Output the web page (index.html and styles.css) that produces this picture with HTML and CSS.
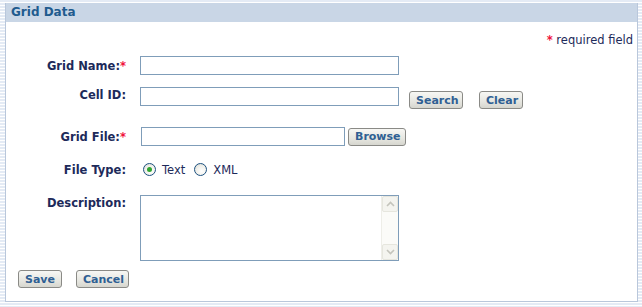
FILE: index.html
```html
<!DOCTYPE html>
<html lang="en">

<head>
    <meta charset="UTF-8">
    <title>Grid Data</title>
    <link rel="stylesheet" href="styles.css">
</head>

<body>
    <div class="panel">
        <div class="panel-head">Grid Data</div>
        <div class="panel-body">
            <div class="req-note"><span class="star">*</span> required field</div>

            <div class="row row-name">
                <label class="lbl">Grid Name:<span class="star">*</span></label>
                <input type="text" class="txt">
            </div>

            <div class="row row-cell">
                <label class="lbl">Cell ID:</label>
                <input type="text" class="txt">
                <button class="btn btn-search">Search</button>
                <button class="btn btn-clear">Clear</button>
            </div>

            <div class="row row-file">
                <label class="lbl">Grid File:<span class="star">*</span></label>
                <input type="text" class="txt txt-file">
                <button class="btn btn-browse">Browse</button>
            </div>

            <div class="row row-type">
                <label class="lbl">File Type:</label>
                <span class="radio checked"></span><span class="opt">Text</span>
                <span class="radio"></span><span class="opt">XML</span>
            </div>

            <div class="row row-desc">
                <label class="lbl">Description:</label>
                <div class="area">
                    <textarea></textarea>
                    <div class="sbar">
                        <div class="sbtn">
                            <svg width="9" height="6" viewBox="0 0 9 6"><path d="M1 5 L4.5 1.5 L8 5" fill="none" stroke="#c4c4bc" stroke-width="1.6"/></svg>
                        </div>
                        <div class="strack"></div>
                        <div class="sbtn">
                            <svg width="9" height="6" viewBox="0 0 9 6"><path d="M1 1 L4.5 4.5 L8 1" fill="none" stroke="#c4c4bc" stroke-width="1.6"/></svg>
                        </div>
                    </div>
                </div>
            </div>

            <div class="actions">
                <button class="btn btn-save">Save</button>
                <button class="btn btn-cancel">Cancel</button>
            </div>
        </div>
    </div>
</body>

</html>
```

FILE: styles.css
```css
body {
    margin: 0;
    height: 307px;
    overflow: hidden;
    font-family: "DejaVu Sans", Verdana, sans-serif;
    font-size: 11.5px;
    background: repeating-linear-gradient(to bottom, #e4ebf5 0, #e4ebf5 2px, #ffffff 2px, #ffffff 3px);
}

button,
input,
textarea {
    outline: none;
    font-family: inherit;
}

.panel {
    width: 631px;
    margin: 3px 0 0 5px;
    border-left: 1px solid #b9c7db;
    border-right: 1px solid #b9c7db;
    border-bottom: 1px solid #b9c7db;
    background-color: #fff;
}

.panel-head {
    height: 19px;
    line-height: 19px;
    padding-left: 5px;
    background-color: #c9d6e6;
    color: #1f5b8e;
    font-weight: bold;
    font-size: 12px;
}

.panel-body {
    height: 279px;
    padding-top: 12px;
    box-sizing: border-box;
}

.req-note {
    text-align: right;
    padding-right: 4px;
    height: 13px;
    line-height: 13px;
    color: #1d2a5a;
}

.star {
    color: #f0143c;
    font-weight: bold;
}

.row {
    display: flex;
    align-items: center;
}

.lbl {
    width: 120px;
    margin-right: 14px;
    text-align: right;
    font-weight: bold;
    color: #1d2a5a;
}

.txt {
    width: 259px;
    height: 19px;
    box-sizing: border-box;
    border: 1px solid #7f9db9;
    padding: 1px 3px;
    margin: 0;
}

.row-name {
    margin-top: 9px;
}

.row-cell {
    margin-top: 12px;
    align-items: flex-start;
}

.row-cell .lbl {
    line-height: 17px;
}

.row-file {
    margin-top: 18px;
}

.txt-file {
    width: 204px;
    margin-left: 1px;
}

.row-type {
    margin-top: 14px;
    height: 19px;
}

.row-desc {
    margin-top: 16px;
    align-items: flex-start;
}

.row-desc .lbl {
    padding-top: 1px;
}

.btn {
    height: 18px;
    box-sizing: border-box;
    padding: 0 6px;
    border: 1px solid #8a8a86;
    border-radius: 3px;
    background: linear-gradient(to bottom, #f7f7f4 0%, #e6e6e0 60%, #d6d6cf 100%);
    color: #2f5f93;
    font-weight: bold;
    font-size: 11px;
    line-height: 15px;
    margin: 0;
}

.btn-search {
    margin: 4px 0 0 10px;
    width: 54px;
}

.btn-clear {
    margin: 4px 0 0 16px;
    width: 44px;
}

.btn-browse {
    margin-left: 3px;
    width: 58px;
}

.radio {
    width: 13px;
    height: 13px;
    box-sizing: border-box;
    border: 1px solid #1c5180;
    border-radius: 50%;
    background: radial-gradient(circle at 60% 65%, #ffffff 0%, #f1f1ec 50%, #d6d6ce 100%);
    margin: 0 6px 0 3px;
    position: relative;
}

.radio.checked::after {
    content: "";
    position: absolute;
    left: 3px;
    top: 3px;
    width: 5px;
    height: 5px;
    border-radius: 50%;
    background-color: #2fa52f;
}

.opt {
    color: #1d2a5a;
    margin-right: 6px;
}

.area {
    width: 259px;
    height: 66px;
    box-sizing: border-box;
    border: 1px solid #7f9db9;
    display: flex;
}

.area textarea {
    flex: 1;
    border: 0;
    resize: none;
    overflow: hidden;
    padding: 2px;
    margin: 0;
}

.sbar {
    width: 16px;
    display: flex;
    flex-direction: column;
    background-color: #fbfbf8;
    border-left: 1px solid #eeeee8;
}

.sbtn {
    height: 16px;
    box-sizing: border-box;
    border: 1px solid #e6e6de;
    border-radius: 2px;
    background-color: #f4f4ef;
    display: flex;
    align-items: center;
    justify-content: center;
}

.strack {
    flex: 1;
}

.actions {
    display: flex;
    margin-top: 9px;
    padding-left: 12px;
}

.btn-save {
    width: 44px;
}

.btn-cancel {
    width: 53px;
    margin-left: 14px;
}
```
